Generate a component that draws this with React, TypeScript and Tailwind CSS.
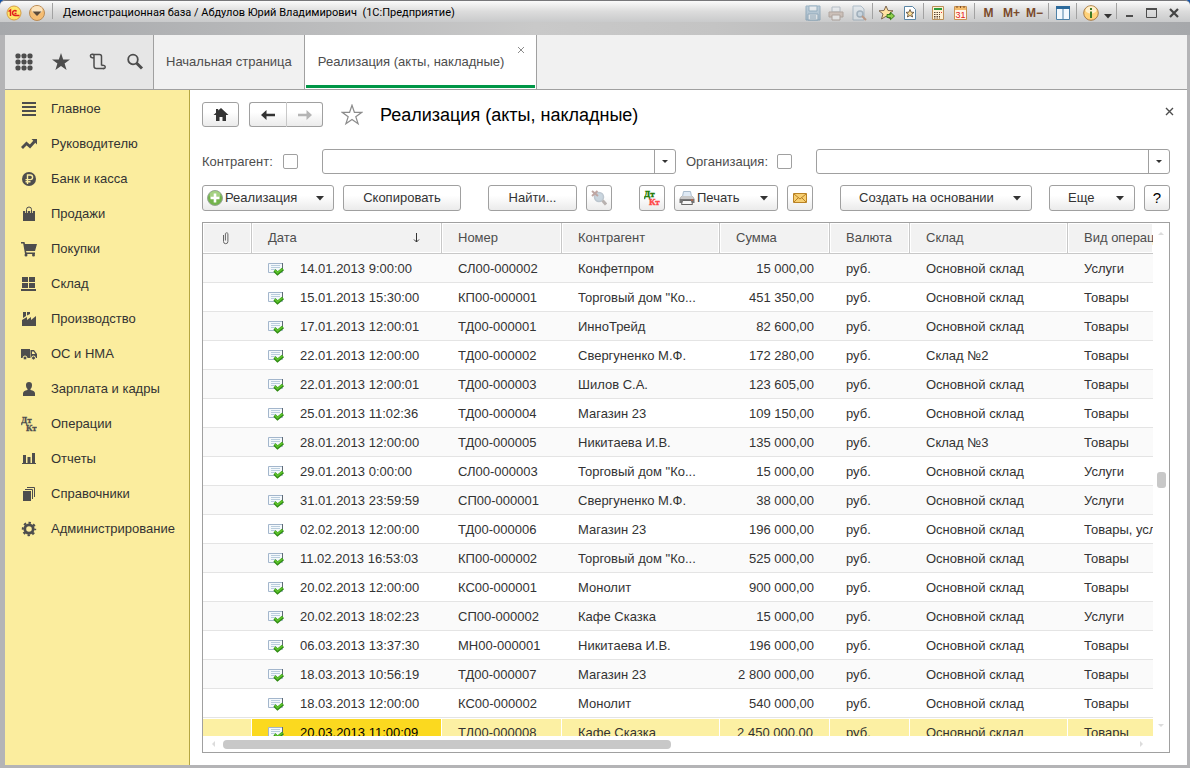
import type { ReactNode } from "react";
import clsx from "clsx";

const sections: { label: string; icon: ReactNode }[] = [
  {
    label: "Главное",
    icon: <path d="M1 1h14v2H1zM1 5h14v2H1zM1 9h14v2H1zM1 13h14v2H1z" />,
  },
  {
    label: "Руководителю",
    icon: (
      <>
        <path d="M1 12l4.500-4.500 3.500 3 4.500-5" fill="none" stroke="#4d4d4d" strokeWidth="2.800" />
        <path d="M10.500 3H16v5.500z" />
      </>
    ),
  },
  {
    label: "Банк и касса",
    icon: (
      <>
        <circle cx="8" cy="8" r="7" />
        <path d="M6.500 13V4h2.800a2.300 2.300 0 010 4.600H4.500M4.500 10.700h5" fill="none" stroke="#fbed9e" strokeWidth="1.400" />
      </>
    ),
  },
  {
    label: "Продажи",
    icon: (
      <>
        <path d="M2 5h12v10H2z" />
        <path d="M5.500 7V3.500a2.500 2.500 0 015 0V7" fill="none" stroke="#fbed9e" strokeWidth="2.600" />
        <path d="M5.500 7V3.500a2.500 2.500 0 015 0V7" fill="none" stroke="#4d4d4d" />
      </>
    ),
  },
  {
    label: "Покупки",
    icon: (
      <>
        <path d="M0 1h3.500l.5 2h12l-2 7H5l.5 1.500H14V13H4L2.200 2.500H0z" />
        <circle cx="5" cy="14" r="1.500" />
        <circle cx="12.500" cy="14" r="1.500" />
      </>
    ),
  },
  {
    label: "Склад",
    icon: <path d="M1 1h6v5H1zM8 1h6v5H8zM1 7h6v5H1zM8 7h6v5H8zM0 13h15v2H0z" />,
  },
  {
    label: "Производство",
    icon: <path d="M2 1h3v4l-3 2zM6 1h3v2L6 4.500zM1 9l5-3v3l4-3v3l5-4v10H1z" />,
  },
  {
    label: "ОС и НМА",
    icon: (
      <>
        <path d="M0 3h9v9H0zM9.500 4H13l3 4v4H9.500z" />
        <path d="M11 5.500h1.600L14.300 8H11z" fill="#fbed9e" />
        <circle cx="4" cy="12" r="2" stroke="#fbed9e" />
        <circle cx="12.500" cy="12" r="2" stroke="#fbed9e" />
      </>
    ),
  },
  {
    label: "Зарплата и кадры",
    icon: <path d="M8 1a3 3 0 013 3c0 2-.6 3.300-1.500 4v1c3 .5 4.500 1.500 4.500 3.500V15H2v-2.500C2 10.500 3.500 9.500 6.500 9V8C5.600 7.300 5 6 5 4a3 3 0 013-3z" />,
  },
  {
    label: "Операции",
    icon: (
      <g fontFamily="Liberation Serif, serif" fontWeight="bold" fontSize="9" stroke="#4d4d4d" strokeWidth=".3">
        <text x="0" y="7">Дт</text>
        <text x="5" y="15">Кт</text>
      </g>
    ),
  },
  {
    label: "Отчеты",
    icon: <path d="M2 4h3v8H2zM6.500 6h3v6h-3zM11 2h3v10h-3zM1 12h14v1H1z" />,
  },
  {
    label: "Справочники",
    icon: (
      <>
        <path d="M2 5h8v10H2z" />
        <path d="M4 3.500h7.500V13M6 1.500h7.500V11" fill="none" stroke="#4d4d4d" />
      </>
    ),
  },
  {
    label: "Администрирование",
    icon: (
      <>
        <circle cx="8" cy="8" r="4.200" fill="none" stroke="#4d4d4d" strokeWidth="2.800" />
        <circle cx="8" cy="8" r="6.200" fill="none" stroke="#4d4d4d" strokeWidth="2" strokeDasharray="2.430 2.430" strokeDashoffset="1.200" />
      </>
    ),
  },
];

const rows = [
  ["14.01.2013 9:00:00", "СЛ00-000002", "Конфетпром", "15 000,00", "Основной склад", "Услуги"],
  ["15.01.2013 15:30:00", "КП00-000001", "Торговый дом \"Ко...", "451 350,00", "Основной склад", "Товары"],
  ["17.01.2013 12:00:01", "ТД00-000001", "ИнноТрейд", "82 600,00", "Основной склад", "Товары"],
  ["22.01.2013 12:00:00", "ТД00-000002", "Свергуненко М.Ф.", "172 280,00", "Склад №2", "Товары"],
  ["22.01.2013 12:00:01", "ТД00-000003", "Шилов С.А.", "123 605,00", "Основной склад", "Товары"],
  ["25.01.2013 11:02:36", "ТД00-000004", "Магазин 23", "109 150,00", "Основной склад", "Товары"],
  ["28.01.2013 12:00:00", "ТД00-000005", "Никитаева И.В.", "135 000,00", "Склад №3", "Товары"],
  ["29.01.2013 0:00:00", "СЛ00-000003", "Торговый дом \"Ко...", "15 000,00", "Основной склад", "Услуги"],
  ["31.01.2013 23:59:59", "СП00-000001", "Свергуненко М.Ф.", "38 000,00", "Основной склад", "Услуги"],
  ["02.02.2013 12:00:00", "ТД00-000006", "Магазин 23", "196 000,00", "Основной склад", "Товары, услуги"],
  ["11.02.2013 16:53:03", "КП00-000002", "Торговый дом \"Ко...", "525 000,00", "Основной склад", "Товары"],
  ["20.02.2013 12:00:00", "КС00-000001", "Монолит", "900 000,00", "Основной склад", "Товары"],
  ["20.02.2013 18:02:23", "СП00-000002", "Кафе Сказка", "15 000,00", "Основной склад", "Услуги"],
  ["06.03.2013 13:37:30", "МН00-000001", "Никитаева И.В.", "196 000,00", "Основной склад", "Товары"],
  ["18.03.2013 10:56:19", "ТД00-000007", "Магазин 23", "2 800 000,00", "Основной склад", "Товары"],
  ["18.03.2013 12:00:00", "КС00-000002", "Монолит", "540 000,00", "Основной склад", "Товары"],
  ["20.03.2013 11:00:09", "ТД00-000008", "Кафе Сказка", "2 450 000,00", "Основной склад", "Товары"],
];

const SELECTED = 16;

function Icon({ children, size = 16, className }: { children: ReactNode; size?: number; className?: string }) {
  return (
    <svg
      width={size}
      height={size}
      viewBox={`0 0 ${size} ${size}`}
      fill="#4d4d4d"
      className={clsx("shrink-0", className)}
      aria-hidden="true"
    >
      {children}
    </svg>
  );
}

function Caret() {
  return (
    <svg width="8" height="5" viewBox="0 0 8 5" fill="#333" className="shrink-0" aria-hidden="true">
      <path d="M0 0h8L4 4.500z" />
    </svg>
  );
}

/* ---------- window title bar ---------- */

function TitleButton({ label, children, className = "w-[23px]" }: { label: string; children: ReactNode; className?: string }) {
  return (
    <button aria-label={label} className={clsx("flex h-5 items-center justify-center", className)}>
      {children}
    </button>
  );
}

function TitleGroup({ children, last }: { children: ReactNode; last?: boolean }) {
  return (
    <div className="flex">
      <div className="flex px-[2px]">{children}</div>
      {!last && <div className="h-4 w-px bg-[#a2a2a2]" />}
    </div>
  );
}

function MemoryLabel({ children }: { children: ReactNode }) {
  return <span className="text-[12px] font-bold text-[#7b4a2b]">{children}</span>;
}

function TitleBar() {
  return (
    <header className="flex h-[35px] shrink-0 flex-col overflow-hidden rounded-t-[5px] border-t border-[#77777a] bg-[linear-gradient(90deg,#a6a8ab,#c9c9c9_45%,#c4c4c4_60%,#a6a8ab)]">
      <div className="flex h-[21px] items-start bg-linear-to-b from-[#fbfbfb] via-[#dcdcdc] to-[#c9cacb] pt-[2px] pr-[3px] pl-[6px]">
        <button aria-label="Главное меню" className="mt-[2px]">
          <svg width="16" height="16" viewBox="0 0 16 16">
            <circle cx="8" cy="8" r="7" fill="#ffe768" stroke="#d69d48" />
            <path d="M2.500 6.500L4.500 5v6M10.500 6.500C9.500 5 6.500 5.300 6.500 8s2 2.700 7 2.500M10.500 8.500H8.500" fill="none" stroke="#e02020" strokeWidth="1.500" />
          </svg>
        </button>
        <button aria-label="Меню окна" className="mt-px ml-[6px]">
          <svg width="18" height="18" viewBox="0 0 18 18">
            <circle cx="9" cy="9" r="7.500" fill="#f5bd73" stroke="#b98b56" />
            <ellipse cx="9" cy="6" rx="5.500" ry="4" fill="#fbe3bd" />
            <path d="M4.500 7.500h9L9 12z" fill="#5b4a3a" />
          </svg>
        </button>
        <div className="ml-[6px] h-4 w-px bg-[#a2a2a2]" />
        <h1 className="ml-[10px] whitespace-pre pt-[2px] font-['Roboto','Liberation_Sans',sans-serif] text-[11px] leading-4 text-black">
          {"Демонстрационная база / Абдулов Юрий Владимирович  (1С:Предприятие)"}
        </h1>

        <div className="ml-auto flex">
          <TitleGroup>
            <TitleButton label="Сохранить">
              <Icon className="opacity-50">
                <path d="M1 1h14v14H1z" fill="#8fb2cc" stroke="#4d7c9e" />
                <path d="M4 1h8v5H4zM3 9h10v6H3z" fill="#e8eff4" stroke="#4d7c9e" />
                <path d="M5 11h6M5 13h6" stroke="#4d7c9e" />
              </Icon>
            </TitleButton>
            <TitleButton label="Печать">
              <Icon className="opacity-50">
                <path d="M4 2h8v5H4z" fill="#e7edf3" stroke="#8494a4" />
                <path d="M1 7h14v5H1z" fill="#c0a99a" stroke="#8b7567" />
                <path d="M4 10h8v5H4z" fill="#f2f2f2" stroke="#8b7567" />
              </Icon>
            </TitleButton>
            <TitleButton label="Предварительный просмотр">
              <Icon className="opacity-50">
                <path d="M2 1h8l3 3v11H2z" fill="#dce6ee" stroke="#7793a9" />
                <circle cx="9" cy="9" r="3" fill="#b9d2e4" stroke="#6b88a0" strokeWidth="1.500" />
                <path d="M11 11l4 4" stroke="#a4623c" strokeWidth="2" />
              </Icon>
            </TitleButton>
          </TitleGroup>
          <TitleGroup>
            <TitleButton label="Добавить в избранное">
              <Icon>
                <path d="M7 1l2 4.500 5 .3-4 3.200 1.500 5L7 11.300 2.500 14 4 9 0 5.800l5-.3z" fill="#ffe1a0" stroke="#7d6650" />
                <path d="M8 9.500h3.500V7.300L15.500 11l-4 3.700v-2.200H8z" fill="#8fd04b" stroke="#3a7d1c" />
              </Icon>
            </TitleButton>
            <TitleButton label="Избранное">
              <Icon>
                <path d="M2.500 1.500h8l3 3v10h-11z" fill="#fff" stroke="#5a86a6" />
                <path d="M8 4.500l1.200 2.700 2.800.2-2.200 1.800.8 2.800L8 10.500 5.400 12l.8-2.800L4 7.400l2.800-.2z" fill="#ffdf98" stroke="#55442f" strokeWidth=".8" />
              </Icon>
            </TitleButton>
          </TitleGroup>
          <TitleGroup>
            <TitleButton label="Калькулятор">
              <Icon>
                <path d="M2.500 1.500h11v13h-11z" fill="#fff1d5" stroke="#ba8f58" />
                <path d="M4 3h8v2H4z" fill="#2f9b3a" />
                <path d="M4 7.500h6M4 9.500h6M4 11.500h6M4 13h6" stroke="#5b4330" strokeDasharray="1.500 1" />
                <path d="M11 7h1v1h-1z" fill="#e33" />
              </Icon>
            </TitleButton>
            <TitleButton label="Календарь">
              <Icon>
                <path d="M1.500 1.500h12v13h-12z" fill="#fff6e8" stroke="#c79257" />
                <path d="M2 2h11v3H2z" fill="#f4bc6c" />
                <path d="M4 1v2M7.500 1v2M11 1v2" stroke="#7d4c22" />
                <text x="2.500" y="13" fontSize="9" fontFamily="Liberation Sans, sans-serif" fill="#e2201c">31</text>
              </Icon>
            </TitleButton>
          </TitleGroup>
          <TitleGroup>
            <TitleButton label="M"><MemoryLabel>M</MemoryLabel></TitleButton>
            <TitleButton label="M+"><MemoryLabel>M+</MemoryLabel></TitleButton>
            <TitleButton label="M-"><MemoryLabel>M−</MemoryLabel></TitleButton>
          </TitleGroup>
          <TitleGroup>
            <TitleButton label="Панели">
              <Icon>
                <path d="M1.500 1.500h13v13h-13z" fill="#f4f9fd" stroke="#4e82a8" />
                <path d="M1 1h14v3H1z" fill="#2c6a9c" />
                <path d="M8 4v11" stroke="#4e82a8" />
              </Icon>
            </TitleButton>
          </TitleGroup>
          <TitleGroup>
            <TitleButton label="Информация">
              <Icon>
                <circle cx="8" cy="8" r="7.300" fill="#ffd27a" stroke="#a87b45" />
                <ellipse cx="8" cy="5" rx="5.500" ry="3.700" fill="#fff0cc" />
                <path d="M7 3h2v2H7zM7 6.500h2V13H7z" fill="#3c7a28" />
              </Icon>
            </TitleButton>
            <TitleButton label="Справка" className="w-3 pt-[6px]">
              <Caret />
            </TitleButton>
          </TitleGroup>
          <TitleGroup last>
            <TitleButton label="Свернуть" className="w-[22px]">
              <Icon><path d="M4 10h7v2H4z" /></Icon>
            </TitleButton>
            <TitleButton label="Развернуть" className="w-[22px]">
              <Icon>
                <path d="M2.500 4h10v8.500h-10z" fill="none" stroke="#4d4d4d" />
                <path d="M2 3h11v2H2z" />
              </Icon>
            </TitleButton>
            <TitleButton label="Закрыть" className="w-[22px]">
              <Icon><path d="M4 4l8 8M12 4l-8 8" stroke="#444" strokeWidth="2.200" /></Icon>
            </TitleButton>
          </TitleGroup>
        </div>
      </div>
    </header>
  );
}

/* ---------- tabs ---------- */

function ToolButton({ label, children }: { label: string; children: ReactNode }) {
  return (
    <button aria-label={label} className="flex w-[37px] items-center justify-center">
      <Icon size={18}>{children}</Icon>
    </button>
  );
}

function TabBar() {
  return (
    <nav className="flex h-[55px] shrink-0 border-b border-[#a0a0a0] bg-[#f1f1f1] text-[#4d4d4d]">
      <div className="flex border-r border-[#a0a0a0] bg-[#e6e6e6]">
        <ToolButton label="Меню функций">
          {[3, 9, 15].map((y) =>
            [3, 9, 15].map((x) => <rect key={`${x}-${y}`} x={x - 2.500} y={y - 2.500} width="5" height="5" rx="1.800" />)
          )}
        </ToolButton>
        <ToolButton label="Избранное">
          <path d="M9 0l2.200 6.500H18l-5.400 4 2 6.500L9 13l-5.600 4 2-6.500L0 6.500h6.800z" />
        </ToolButton>
        <ToolButton label="История">
          <g fill="none" stroke="#4d4d4d" strokeWidth="1.500">
            <path d="M5 5V3a1.800 1.500 0 10-3.500 0c0 1.500 1 2 3.500 2v8a2.500 2.500 0 002.500 2.500h7.500" />
            <path d="M3.500 1.500h7a2 2 0 012 2v9" />
            <path d="M12.500 12.500c2.500-.5 3.700.2 3.700 1.500s-1.200 1.700-2.200 1.500" />
          </g>
        </ToolButton>
        <ToolButton label="Поиск">
          <circle cx="7" cy="6.500" r="4.800" fill="none" stroke="#4d4d4d" strokeWidth="1.800" />
          <path d="M10.500 10l5.500 5.500" stroke="#4d4d4d" strokeWidth="3" />
        </ToolButton>
      </div>
      <button className="border-r border-[#a0a0a0] px-3">Начальная страница</button>
      <div className="relative flex border-r border-[#a0a0a0] bg-white px-px pb-px">
        <button className="border-b-[3px] border-[#009646] pt-[3px] pr-[31px] pl-3">Реализация (акты, накладные)</button>
        <button aria-label="Закрыть вкладку" className="absolute top-[11px] right-[11px]">
          <svg width="8" height="8" viewBox="0 0 8 8" stroke="#8c8c8c">
            <path d="M1 1l6 6M7 1L1 7" />
          </svg>
        </button>
      </div>
    </nav>
  );
}

/* ---------- sections panel ---------- */

function Sidebar() {
  return (
    <aside className="w-[185px] shrink-0 border-r border-[#b5a642] bg-[#fbed9e] pt-px">
      <ul>
        {sections.map((s) => (
          <li key={s.label}>
            <a href="#" className="flex h-[35px] items-center gap-[14px] pl-4 text-[#333]">
              <Icon>{s.icon}</Icon>
              {s.label}
            </a>
          </li>
        ))}
      </ul>
    </aside>
  );
}

/* ---------- form ---------- */

function Button({ children, label, className }: { children: ReactNode; label?: string; className?: string }) {
  return (
    <button
      aria-label={label}
      className={clsx(
        "flex shrink-0 items-center justify-center rounded-[3px] border border-[#a0a0a0] bg-linear-to-b from-white from-40% to-[#ebebeb] text-[#333]",
        className
      )}
    >
      {children}
    </button>
  );
}

function Filter({ id, label, className }: { id: string; label: string; className: string }) {
  return (
    <>
      <div className={clsx("flex shrink-0 items-center justify-between", className)}>
        <label htmlFor={id}>{label}</label>
        <input id={id} type="checkbox" className="size-[15px] appearance-none rounded-[2px] border border-[#a0a0a0] bg-white" />
      </div>
      <div className="flex h-[25px] min-w-0 flex-1 rounded-[3px] border border-[#a0a0a0]">
        <input type="text" aria-label={label} className="min-w-0 flex-1 px-1 outline-none" />
        <button aria-label="Выбрать" className="flex w-[21px] items-center justify-center border-l border-[#a0a0a0]">
          <svg width="6" height="3" viewBox="0 0 6 3" fill="#333">
            <path d="M0 0h6L3 3z" />
          </svg>
        </button>
      </div>
    </>
  );
}

function FormHeader() {
  return (
    <div className="flex h-[25px] items-center">
      <Button label="Домой" className="h-[25px] w-[37px]">
        <Icon>
          <path d="M8 1l7.500 7H13v6H9.500v-4h-3v4H3V8H.5L3 5.700V2h2.200v1.600z" fill="#333" />
        </Icon>
      </Button>
      <div className="ml-[10px] flex">
        <Button label="Назад" className="h-[25px] w-[38px] rounded-r-none border-r-[#c8c8c8]">
          <Icon><path d="M1 8l5.500-5v3.700H15v2.600H6.500V13z" fill="#333" /></Icon>
        </Button>
        <Button label="Вперед" className="h-[25px] w-9 rounded-l-none border-l-0">
          <Icon><path d="M15 8L9.500 3v3.700H1v2.600h8.500V13z" fill="#b5b5b5" /></Icon>
        </Button>
      </div>
      <button aria-label="В избранное" className="ml-[18px]">
        <Icon size={22}>
          <path d="M11 1.200l2.400 7.100h7.400l-6 4.400 2.300 7.100-6.100-4.400-6.100 4.400 2.300-7.100-6-4.400h7.400z" fill="#fff" stroke="#8c8c8c" strokeWidth="1.200" />
        </Icon>
      </button>
      <h2 className="ml-[17px] text-[18px] leading-6 text-black">Реализация (акты, накладные)</h2>
      <button aria-label="Закрыть" className="mr-[-4px] mb-[6px] ml-auto">
        <svg width="9" height="9" viewBox="0 0 9 9" stroke="#4d4d4d" strokeWidth="1.400">
          <path d="M1 1l7 7M8 1L1 8" />
        </svg>
      </button>
    </div>
  );
}

function Toolbar() {
  return (
    <div className="mt-[11px] flex h-[26px] items-stretch justify-between">
      <div className="flex gap-[9px]">
        <Button className="w-[132px] px-1">
          <Icon>
            <circle cx="8" cy="8" r="7.500" fill="#73b34c" stroke="#9aa79a" />
            <ellipse cx="8" cy="5" rx="5.500" ry="4" fill="#a5d184" />
            <path d="M6.700 3.500h2.600v3.200h3.200v2.600H9.300v3.200H6.700V9.300H3.500V6.700h3.200z" fill="#fff" />
          </Icon>
          <span className="ml-[2px] mr-auto">Реализация</span>
          <span className="mr-[5px]"><Caret /></span>
        </Button>
        <Button className="w-[118px]">Скопировать</Button>
      </div>
      <div className="flex gap-[9px]">
        <Button className="w-[89px]">Найти...</Button>
        <Button label="Отменить поиск" className="w-[26px]">
          <Icon className="opacity-70">
            <circle cx="8" cy="7" r="4.500" fill="#b5c6d3" stroke="#a3b1bd" strokeWidth="1.500" />
            <path d="M11.500 10.500l3.500 4" stroke="#a09794" strokeWidth="3" />
            <path d="M1 1l6 5M6.500 1L1 6" stroke="#a5827d" strokeWidth="2" />
          </Icon>
        </Button>
      </div>
      <div className="flex gap-[9px]">
        <Button label="Дт/Кт" className="w-[26px]">
          <Icon>
            <g fontFamily="Liberation Serif, serif" fontWeight="bold" fontSize="9" strokeWidth=".4">
              <text x="0" y="7" fill="#1c7a00" stroke="#1c7a00">Дт</text>
              <text x="5" y="15" fill="#ff4646" stroke="#ff4646">Кт</text>
            </g>
          </Icon>
        </Button>
        <Button className="w-[104px] pl-1">
          <Icon>
            <path d="M4.500 1.500h7l1 5h-9z" fill="#dfeaf5" stroke="#a9bccd" />
            <path d="M2.500 6h11L15.500 9v4h-15V9z" fill="#777" />
            <path d="M2.500 6h11l1.500 3H1z" fill="#c9c9c9" />
            <path d="M3.500 10.500h9l1 4h-11z" fill="#f6f6f6" stroke="#666" />
            <path d="M12 9.500h2v1h-2z" fill="#e35a2a" />
          </Icon>
          <span className="ml-[2px] mr-auto">Печать</span>
          <span className="mr-[9px]"><Caret /></span>
        </Button>
        <Button label="Отправить по почте" className="w-[26px]">
          <Icon>
            <path d="M1.500 3.500h13v9h-13z" fill="#f7cf72" stroke="#b98225" />
            <path d="M2 4l6 5 6-5M2 12l4.500-4.500M14 12L9.500 7.500" fill="none" stroke="#b98225" />
          </Icon>
        </Button>
      </div>
      <div className="flex gap-[17px]">
        <Button className="w-[192px] px-[10px]">
          <span className="ml-2 mr-auto">Создать на основании</span>
          <Caret />
        </Button>
        <div className="flex gap-[9px]">
          <Button className="w-[86px] px-[10px]">
            <span className="ml-2 mr-auto">Еще</span>
            <Caret />
          </Button>
          <Button label="Справка" className="w-[26px] text-[15px] text-black">?</Button>
        </div>
      </div>
    </div>
  );
}

function PostedIcon() {
  return (
    <Icon>
      <path d="M.5 2.500h14v9H.5z" fill="#f5f9fc" stroke="#a3b6cc" />
      <path d="M14.500 2v6" stroke="#5f6b77" />
      <path d="M3 4.500h9M3 6.500h9M3 8.500h5" stroke="#b9cddd" />
      <path d="M6.500 9.500l3 3 5.500-4.500" fill="none" stroke="#2f8a12" strokeWidth="3.200" />
      <path d="M6.800 9.200l2.700 2.600 5-4" fill="none" stroke="#5cc22c" strokeWidth="1.800" />
    </Icon>
  );
}

function Th({ children }: { children: ReactNode }) {
  return (
    <th
      scope="col"
      className="h-[31px] overflow-hidden border-r border-b border-[#c8c8c8] bg-[#f2f2f2] px-4 text-left font-normal whitespace-nowrap text-[#4d4d4d] shadow-[inset_1px_1px_0_#fff,inset_-1px_-1px_0_#fff] last:border-r-0 last:pr-0"
    >
      {children}
    </th>
  );
}

function DocumentsTable() {
  return (
    <table className="w-full table-fixed border-separate border-spacing-0">
      <colgroup>
        <col className="w-[49px]" />
        <col className="w-[190px]" />
        <col className="w-[120px]" />
        <col className="w-[158px]" />
        <col className="w-[110px]" />
        <col className="w-[80px]" />
        <col className="w-[158px]" />
        <col />
      </colgroup>
      <thead>
        <tr>
          <Th>
            <svg width="14" height="14" viewBox="0 0 14 14" fill="none" stroke="#666" aria-label="Вложения">
              <path d="M4.500 4v6.500a2.200 2.200 0 004.400 0V2.500a1.500 1.500 0 00-2.500 0V9.500" />
            </svg>
          </Th>
          <Th>
            <span className="flex items-center justify-between">
              Дата
              <svg width="7" height="10" viewBox="0 0 7 10" fill="none" stroke="#333" className="mr-[5px]" aria-hidden="true">
                <path d="M3.500 0v9M1 6.500L3.500 9 6 6.500" />
              </svg>
            </span>
          </Th>
          <Th>Номер</Th>
          <Th>Контрагент</Th>
          <Th>Сумма</Th>
          <Th>Валюта</Th>
          <Th>Склад</Th>
          <Th>Вид операции</Th>
        </tr>
      </thead>
      <tbody className="text-[#333]">
        {rows.map(([date, number, partner, sum, store, kind], i) => {
          const selected = i === SELECTED;
          const cell = clsx(
            "h-[29px] overflow-hidden border-b px-4 whitespace-nowrap last:pr-0",
            selected ? "border-t border-r border-white bg-[#fcf0a3] last:border-r-0" : "border-[#e4e4e4] pt-[2px]",
            !selected && i % 2 === 0 && "bg-[#fafafa]"
          );
          return (
            <tr key={number} aria-selected={selected}>
              <td className={cell} />
              <td className={clsx(cell, selected && "bg-[#fbd91f]! text-black")}>
                <span className="flex items-center gap-4">
                  <PostedIcon />
                  {date}
                </span>
              </td>
              <td className={cell}>{number}</td>
              <td className={cell}>{partner}</td>
              <td className={clsx(cell, "text-right")}>{sum}</td>
              <td className={cell}>руб.</td>
              <td className={cell}>{store}</td>
              <td className={cell}>{kind}</td>
            </tr>
          );
        })}
      </tbody>
    </table>
  );
}

function DocumentsList() {
  return (
    <div className="mt-[11px] flex min-h-0 flex-1 border border-[#a0a0a0]">
      <div className="flex min-w-0 flex-1 flex-col">
        <div className="min-h-0 flex-1 overflow-hidden">
          <DocumentsTable />
        </div>
        {/* Horizontal scroll */}
        <div className="flex h-4 shrink-0 items-center px-2">
          <svg width="12" height="6" viewBox="0 0 12 6" fill="#dcdcdc"><path d="M4 0v6L1 3z" /></svg>
          <div className="flex-1">
            <div className="h-[9px] w-[49%] rounded-[4px] bg-[#c8c8c8]" />
          </div>
          <svg width="8" height="6" viewBox="0 0 8 6" fill="#dcdcdc"><path d="M3 0v6l3-3z" /></svg>
        </div>
      </div>
      {/* Vertical scroll */}
      <div className="flex w-4 shrink-0 flex-col items-center justify-between pt-2 pb-6">
        <svg width="6" height="4" viewBox="0 0 6 4" fill="#dcdcdc"><path d="M0 4h6L3 1z" /></svg>
        <div className="h-4 w-[9px] rounded-[3px] bg-[#c8c8c8]" />
        <svg width="6" height="4" viewBox="0 0 6 4" fill="#dcdcdc"><path d="M0 0h6L3 3z" /></svg>
      </div>
    </div>
  );
}

export default function App() {
  return (
    <div className="h-screen bg-[#1453a8] font-['Liberation_Sans',Arial,sans-serif] text-[13px] leading-4 text-[#4d4d4d]">
      <div className="flex h-full flex-col overflow-hidden rounded-t-[5px] bg-[#b4b4b6]">
        <TitleBar />
        <div className="mr-[3px] mb-[3px] ml-[5px] flex min-h-0 flex-1 flex-col bg-white">
          <TabBar />
          <div className="flex min-h-0 flex-1">
            <Sidebar />
            <main className="flex min-w-0 flex-1 flex-col pt-3 pr-[17px] pb-3 pl-3">
              <FormHeader />
              <div className="mt-[22px] flex items-center">
                <Filter id="partner" label="Контрагент:" className="mr-6 w-[96px]" />
                <Filter id="company" label="Организация:" className="mr-6 ml-[10px] w-[106px]" />
              </div>
              <Toolbar />
              <DocumentsList />
            </main>
          </div>
        </div>
      </div>
    </div>
  );
}
